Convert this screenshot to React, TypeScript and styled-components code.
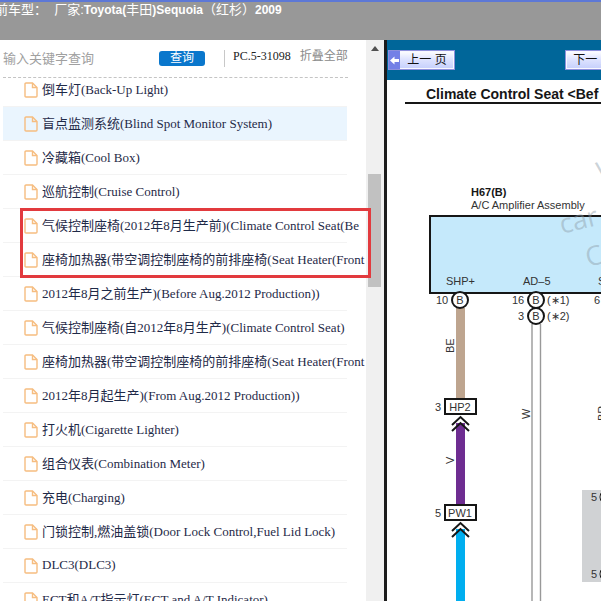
import React, { useState } from "react";
import styled, { createGlobalStyle } from "styled-components";

const GlobalStyle = createGlobalStyle`
  * { box-sizing: border-box; }
  html, body { margin: 0; padding: 0; overflow: hidden; background: #fff; }
  button, input { font: inherit; }
`;

const sans = `"Liberation Sans", "Noto Sans CJK SC", sans-serif`;
const serif = `"Liberation Serif", "Noto Sans CJK SC", serif`;

const Page = styled.div`
  display: flex;
  flex-direction: column;
  height: 100vh;
  overflow: hidden;
  font-family: ${serif};
  font-size: 13px;
`;

const Header = styled.header`
  flex: none;
  display: flex;
  height: 40px;
  border-top: 2px solid #5d78d6;
  background: #989898;
  color: #fff;
  font: bold 12px/16px ${sans};
  white-space: nowrap;
  overflow: hidden;
`;

const VehicleLabel = styled.span`
  flex: none;
  margin-left: -5px;
  white-space: pre;
  font-size: 13px;
  font-weight: 400;
`;

const Thin = styled.span`
  font-size: 13px;
  font-weight: 400;
`;

const Main = styled.main`
  flex: 1;
  min-height: 0;
  display: grid;
  grid-template-columns: 387px minmax(0, 1fr);
`;

const Sidebar = styled.aside`
  position: relative;
  display: flex;
  min-height: 0;
  border-right: 3px solid #1c1c1c;
`;

const SidebarContent = styled.div`
  flex: 1;
  min-width: 0;
  display: flex;
  flex-direction: column;
  overflow: hidden;
`;

const SearchBar = styled.form`
  flex: none;
  display: flex;
  align-items: center;
  height: 38px;
  margin: 0 18px 0 3px;
  border-bottom: 1px dashed #c4c4c4;
  white-space: nowrap;
`;

const SearchInput = styled.input`
  width: 156px;
  height: 24px;
  padding: 0;
  border: 0;
  outline: 0;
  font-size: 13px;
  &::placeholder { color: #a0a0a0; opacity: 1; }
`;

const SearchButton = styled.button`
  width: 46px;
  height: 15px;
  padding: 0;
  border: 0;
  border-radius: 3px;
  background: #0a77cc;
  color: #fff;
  font-size: 12px;
  line-height: 15px;
`;

const CodeLabel = styled.span`
  height: 17px;
  margin-left: 19px;
  padding-left: 8px;
  border-left: 1px solid #c8c8c8;
  color: #222;
  font-size: 12px;
  line-height: 12px;
`;

const CollapseButton = styled.button`
  height: 17px;
  margin-left: 9px;
  padding: 0 0 5px;
  border: 0;
  background: none;
  color: #8a8a8a;
  font-size: 12px;
  line-height: 12px;
`;

const List = styled.ul`
  flex: 1;
  min-height: 0;
  margin: -5px 0 0;
  padding: 0;
  list-style: none;
  overflow: hidden;
`;

const Item = styled.li<{ $active?: boolean }>`
  height: 34px;
  margin: 0 19px 0 3px;
  border-bottom: 1px solid #f3f3f3;
  background: ${(p) => (p.$active ? "#eaf5fe" : "transparent")};
`;

const ItemLink = styled.a`
  display: flex;
  align-items: center;
  gap: 4px;
  height: 33px;
  padding-left: 21px;
  color: #1f2a48;
  text-decoration: none;
  white-space: nowrap;
  svg { flex: none; }
`;

const ItemText = styled.span`
  padding-bottom: 2px;
`;

const Highlight = styled.div`
  position: absolute;
  top: 168px;
  left: 20px;
  right: 13px;
  height: 70px;
  border: 3px solid #e23a3e;
  pointer-events: none;
`;

const Scrollbar = styled.div`
  flex: none;
  display: flex;
  flex-direction: column;
  align-items: center;
  width: 18px;
  padding-right: 1px;
  background: #f0f0f0;
`;

const ScrollUp = styled.button`
  display: flex;
  align-items: center;
  justify-content: center;
  width: 17px;
  height: 17px;
  padding: 0;
  border: 0;
  background: none;
`;

const ScrollThumb = styled.div`
  width: 13px;
  height: 113px;
  margin-top: 117px;
  background: #c1c1c1;
`;

const Viewer = styled.section`
  display: flex;
  flex-direction: column;
  min-width: 0;
  min-height: 0;
  overflow: hidden;
  font-family: ${sans};
`;

const Pager = styled.nav`
  flex: none;
  display: flex;
  align-items: center;
  gap: 110px;
  height: 40px;
  padding-left: 1px;
  background: #006699;
`;

const PageButton = styled.button`
  flex: none;
  display: flex;
  align-items: center;
  width: 67px;
  height: 20px;
  padding: 0;
  border: 1px solid #8d90dc;
  background: linear-gradient(#fff, #dfe4ff 45%, #c5cffc);
  box-shadow: inset 0 0 0 1px #f8f8ff;
  color: #111;
  font-size: 12px;
  line-height: 18px;
`;

const PageIcon = styled.span`
  display: flex;
  align-items: center;
  justify-content: center;
  width: 11px;
  height: 18px;
  background: #7380e6;
`;

const PageText = styled.span`
  flex: 1;
  text-align: center;
  white-space: nowrap;
`;

const DiagramTitle = styled.h1`
  flex: none;
  height: 24px;
  margin: 0 0 0 18px;
  padding-left: 21px;
  border-bottom: 2px solid #161616;
  color: #161616;
  font-size: 14px;
  line-height: 28px;
  white-space: nowrap;
`;

const Diagram = styled.svg`
  flex: 1;
  min-height: 0;
  width: 100%;
  font-family: ${sans};
  font-size: 11px;
  fill: #333;
`;

const items = [
  "倒车灯(Back-Up Light)",
  "盲点监测系统(Blind Spot Monitor System)",
  "冷藏箱(Cool Box)",
  "巡航控制(Cruise Control)",
  "气候控制座椅(2012年8月生产前)(Climate Control Seat(Be",
  "座椅加热器(带空调控制座椅的前排座椅(Seat Heater(Front",
  "2012年8月之前生产)(Before Aug.2012 Production))",
  "气候控制座椅(自2012年8月生产)(Climate Control Seat)",
  "座椅加热器(带空调控制座椅的前排座椅(Seat Heater(Front",
  "2012年8月起生产)(From Aug.2012 Production))",
  "打火机(Cigarette Lighter)",
  "组合仪表(Combination Meter)",
  "充电(Charging)",
  "门锁控制,燃油盖锁(Door Lock Control,Fuel Lid Lock)",
  "DLC3(DLC3)",
  "ECT和A/T指示灯(ECT and A/T Indicator)",
];

const FileIcon = () => (
  <svg width="14" height="16" viewBox="0 0 14 16" fill="none" stroke="#f6bd80" strokeWidth="1.4" aria-hidden="true">
    <path d="M2 1H8.5L13 5.5V14Q13 15 12 15H2Q1 15 1 14V2Q1 1 2 1Z" />
    <path d="M8.5 1V5.5H13" />
  </svg>
);

const Pin = ({ x, y }: { x: number; y: number }) => (
  <g>
    <circle cx={x} cy={y} r="8" fill="#fff" stroke="#161616" strokeWidth="2" />
    <text x={x} y={y + 4} textAnchor="middle">B</text>
  </g>
);

const Connector = ({ y, label, pin }: { y: number; label: string; pin: string }) => (
  <g>
    <text x="48" y={y + 12}>{pin}</text>
    <rect x="58" y={y} width="31" height="15" fill="#fff" stroke="#161616" strokeWidth="2" />
    <text x="73" y={y + 12} textAnchor="middle">{label}</text>
    <path d={`M65 ${y + 26}L73.5 ${y + 18}L82 ${y + 26}M65 ${y + 32}L73.5 ${y + 24}L82 ${y + 32}`} fill="none" stroke="#161616" strokeWidth="2" />
  </g>
);

const Watermark = ({ x, y, children }: { x: number; y: number; children: string }) => (
  <text x={x} y={y} transform={`rotate(-14 ${x} ${y})`} fontFamily='"Open Sans", sans-serif' fontSize="27" fill="#8c9ca8" fillOpacity="0.45">{children}</text>
);

const WiringDiagram = () => (
  <Diagram role="img" aria-label="Wiring diagram">
    <text x="84" y="92" fontWeight="bold" fill="#161616">H67(B)</text>
    <text x="84" y="105">A/C Amplifier Assembly</text>
    <rect x="43" y="112" width="900" height="77" fill="#c5e9fb" stroke="#161616" strokeWidth="2" />
    <text x="59" y="181">SHP+</text>
    <text x="136" y="181">AD–5</text>
    <text x="211" y="181">S</text>
    <Watermark x={175} y={130}>car</Watermark>
    <Watermark x={201} y={163}>C</Watermark>
    <Watermark x={211} y={73}>w</Watermark>

    <rect x="69" y="204" width="9" height="91" fill="#bea58f" />
    <rect x="69" y="319" width="9" height="83" fill="#6e2d91" />
    <rect x="69" y="425" width="9" height="600" fill="#00aeef" />
    <path d="M145 220V1000M153.5 220V1000" fill="none" stroke="#999" strokeWidth="1.4" />

    <text x="49" y="200">10</text>
    <Pin x={73} y={196} />
    <text x="125" y="200">16</text>
    <Pin x={149} y={196} />
    <text x="160" y="200">(∗1)</text>
    <text x="131" y="216">3</text>
    <Pin x={149} y={212} />
    <text x="160" y="216">(∗2)</text>
    <text x="207" y="200">6</text>

    <text transform="translate(67 249) rotate(-90)">BE</text>
    <text transform="translate(67 360) rotate(-90)">V</text>
    <text transform="translate(143 315) rotate(-90)">W</text>
    <text transform="translate(219 317) rotate(-90)">BR</text>
    <Connector y={295} label="HP2" pin="3" />
    <Connector y={401} label="PW1" pin="5" />

    <rect x="195" y="386" width="300" height="92" fill="#d0d2d4" />
    <text x="204" y="397">5</text>
    <text x="204" y="474">5</text>
    <circle cx="221" cy="393" r="8" fill="#fff" stroke="#161616" strokeWidth="1" />
    <circle cx="221" cy="470" r="8" fill="#fff" stroke="#161616" strokeWidth="1" />
  </Diagram>
);

export default function App() {
  const [active, setActive] = useState(1);
  const [query, setQuery] = useState("");
  return (
    <>
      <GlobalStyle />
      <Page>
        <Header>
          <VehicleLabel>前车型：  厂家:</VehicleLabel>
          <span>
            Toyota(<Thin>丰田</Thin>)Sequoia<Thin>（红杉）</Thin>2009
          </span>
        </Header>
        <Main>
          <Sidebar>
            <SidebarContent>
              <SearchBar onSubmit={(e) => e.preventDefault()}>
                <SearchInput
                  aria-label="输入关键字查询"
                  placeholder="输入关键字查询"
                  value={query}
                  onChange={(e) => setQuery(e.target.value)}
                />
                <SearchButton type="submit">查询</SearchButton>
                <CodeLabel>PC.5-31098</CodeLabel>
                <CollapseButton type="button">折叠全部</CollapseButton>
              </SearchBar>
              <List>
                {items.map((label, i) => (
                  <Item key={i} $active={i === active}>
                    <ItemLink href="#" onClick={(e) => { e.preventDefault(); setActive(i); }}>
                      <FileIcon />
                      <ItemText>{label}</ItemText>
                    </ItemLink>
                  </Item>
                ))}
              </List>
            </SidebarContent>
            <Scrollbar>
              <ScrollUp type="button" aria-label="Scroll up">
                <svg width="8" height="5" viewBox="0 0 8 5" aria-hidden="true">
                  <path d="M0 5L4 0L8 5Z" fill="#505050" />
                </svg>
              </ScrollUp>
              <ScrollThumb />
            </Scrollbar>
            <Highlight />
          </Sidebar>
          <Viewer>
            <Pager>
              <PageButton type="button">
                <PageIcon>
                  <svg width="9" height="9" viewBox="0 0 9 9" aria-hidden="true">
                    <path d="M0 4.5L4.5 0.5V3H9V6H4.5V8.5Z" fill="#fff" />
                  </svg>
                </PageIcon>
                <PageText>上一 页</PageText>
              </PageButton>
              <PageButton type="button">
                <PageText>下一 页</PageText>
                <PageIcon>
                  <svg width="9" height="9" viewBox="0 0 9 9" aria-hidden="true">
                    <path d="M9 4.5L4.5 0.5V3H0V6H4.5V8.5Z" fill="#fff" />
                  </svg>
                </PageIcon>
              </PageButton>
            </Pager>
            <DiagramTitle>Climate Control Seat &lt;Bef</DiagramTitle>
            <WiringDiagram />
          </Viewer>
        </Main>
      </Page>
    </>
  );
}
